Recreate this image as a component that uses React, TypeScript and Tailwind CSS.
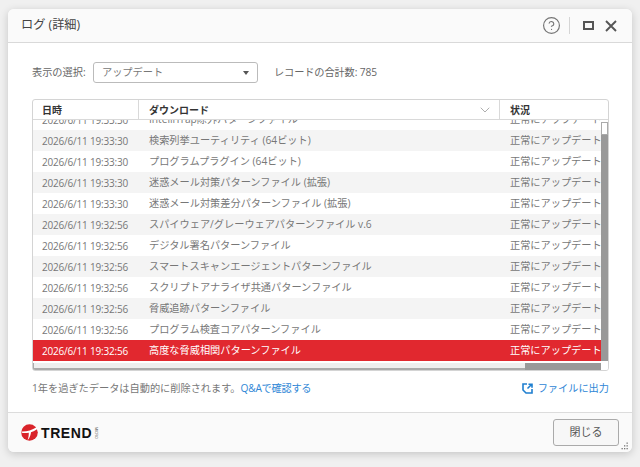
import { CircleHelp, ChevronDown } from 'lucide-react';

const ROWS = [
  { time: '2026/6/11 19:33:30', name: 'IntelliTrap除外パターンファイル' },
  { time: '2026/6/11 19:33:30', name: '検索列挙ユーティリティ (64ビット)' },
  { time: '2026/6/11 19:33:30', name: 'プログラムプラグイン (64ビット)' },
  { time: '2026/6/11 19:33:30', name: '迷惑メール対策パターンファイル (拡張)' },
  { time: '2026/6/11 19:33:30', name: '迷惑メール対策差分パターンファイル (拡張)' },
  { time: '2026/6/11 19:32:56', name: 'スパイウェア/グレーウェアパターンファイル v.6' },
  { time: '2026/6/11 19:32:56', name: 'デジタル署名パターンファイル' },
  { time: '2026/6/11 19:32:56', name: 'スマートスキャンエージェントパターンファイル' },
  { time: '2026/6/11 19:32:56', name: 'スクリプトアナライザ共通パターンファイル' },
  { time: '2026/6/11 19:32:56', name: '脅威追跡パターンファイル' },
  { time: '2026/6/11 19:32:56', name: 'プログラム検査コアパターンファイル' },
  { time: '2026/6/11 19:32:56', name: '高度な脅威相関パターンファイル' },
];

export default function App() {
  return (
    <div className="w-[640px] h-[467px] bg-[#f0f0f0] pt-[9px] px-2 font-['Open_Sans','Noto_Sans_CJK_JP',sans-serif] overflow-hidden">
      <div className="w-[624px] h-[443px] bg-white rounded-md shadow-[0_2px_8px_rgba(0,0,0,0.18)] flex flex-col overflow-hidden relative">
        {/* Title bar */}
        <div className="h-[34px] shrink-0 bg-[#fafafa] border-b border-[#d9d9d9] flex items-center pl-[13px] pr-[15px]">
          <span className="text-[12.2px] text-[#444]">ログ (詳細)</span>
          <CircleHelp className="ml-auto w-[19px] h-[19px] text-[#777]" strokeWidth={1.5} />
          <div className="w-px h-[17px] bg-[#d5d5d5] ml-[8px] mr-[13px]" />
          <svg width="11" height="9" viewBox="0 0 11 9" fill="none" stroke="#555" strokeWidth="2" className="shrink-0">
            <rect x="1" y="1" width="9" height="7" />
          </svg>
          <svg width="12" height="12" viewBox="0 0 12 12" fill="none" stroke="#555" strokeWidth="1.9" className="ml-[11px] shrink-0">
            <path d="M1 1l10 10M11 1L1 11" />
          </svg>
        </div>

        {/* Body */}
        <div className="flex-1 px-6 pt-[19px] min-h-0">
          <div className="flex items-center h-[21px]">
            <span className="text-[10.2px] text-[#666] w-[61px] pt-px">表示の選択:</span>
            <div className="w-[165px] h-[21px] border border-[#bbb] rounded-[3px] flex items-center pl-2 pr-[8px]">
              <span className="text-[10.2px] text-[#777]">アップデート</span>
              <span className="ml-auto w-0 h-0 border-x-[3.5px] border-x-transparent border-t-[4px] border-t-[#555]" />
            </div>
            <span className="ml-4 text-[10.2px] text-[#666] tracking-[-0.1px] pt-px">レコードの合計数: 785</span>
          </div>

          {/* Table */}
          <div className="mt-[16px] w-[577px] h-[272px] border border-[#d4d4d4] rounded-[3px] flex flex-col overflow-hidden">
            <div className="h-5 shrink-0 flex items-center border-b border-[#d9d9d9] text-[10px] leading-none font-bold text-[#333]">
              <div className="w-[106px] h-full pl-[9px] pt-px flex items-center border-r border-[#d9d9d9]">日時</div>
              <div className="w-[361px] h-full pl-[10px] pr-[6px] pt-px flex items-center justify-between border-r border-[#d9d9d9]">
                <span>ダウンロード</span>
                <ChevronDown className="w-4 h-4 text-[#999]" strokeWidth={1.2} />
              </div>
              <div className="pl-[10px] pt-px">状況</div>
            </div>
            <div className="flex-1 min-h-0 flex">
              <div className="flex-1 min-w-0 flex flex-col">
                <div className="flex-1 min-h-0 overflow-hidden">
                  <div className="mt-[-11px]">
                    {ROWS.map((row, i) => {
                      const selected = i === ROWS.length - 1;
                      return (
                        <div
                          key={i}
                          className={`h-[21px] pt-px flex items-center whitespace-nowrap overflow-hidden text-[10.2px] ${
                            selected ? 'bg-[#e1282f] text-white' : i % 2 === 1 ? 'bg-[#f4f4f4] text-[#777]' : 'bg-white text-[#777]'
                          }`}
                        >
                          <div className="w-[107px] pl-[9px] shrink-0 text-[10px] tracking-[-0.2px]">{row.time}</div>
                          <div className="w-[361px] pl-[9px] shrink-0">{row.name}</div>
                          <div className="pl-[9px] shrink-0">正常にアップデート</div>
                        </div>
                      );
                    })}
                  </div>
                </div>
                <div className="h-[9px] shrink-0 flex items-end">
                  <div className="h-[7px] w-full bg-[#eeeeee] border-b-2 border-l border-[#aaa] flex justify-end">
                    <div className="w-[76px] h-[7px] bg-[#999]" />
                  </div>
                </div>
              </div>
              <div className="w-[7px] shrink-0 flex flex-col">
                <div className="h-[2px] bg-white" />
                <div className="h-[13px] bg-white border border-[#aaa]" />
                <div className="flex-1 bg-[#999]" />
                <div className="h-[9px] bg-white" />
              </div>
            </div>
          </div>

          <div className="mt-[10px] flex items-center justify-between text-[10.2px] w-[577px]">
            <span className="text-[#777]">
              1年を過ぎたデータは自動的に削除されます。<span className="text-[#2e86d6] tracking-[-0.25px]">Q&amp;Aで確認する</span>
            </span>
            <span className="flex items-center gap-[5px] text-[#2e86d6]">
              <svg width="11" height="11" viewBox="0 0 11 11" fill="none" stroke="#1f7fd0" strokeWidth="1.6">
                <path d="M5 1H1v6l3 3h6V6" />
                <path d="M6.5 1.2H10v3.5M9.8 1.2L5.5 5.5" />
              </svg>
              ファイルに出力
            </span>
          </div>
        </div>

        {/* Footer */}
        <div className="h-[40px] shrink-0 bg-[#fafafa] border-t border-[#dcdcdc] flex items-center pl-[13px] pr-[3px]">
          <svg width="17" height="17" viewBox="0 0 17 17" className="shrink-0">
            <circle cx="8.5" cy="8.5" r="8.3" fill="#d9232a" />
            <path d="M0.6 7.4C5.5 7.6 11 6.2 15.6 3.2L16.4 5C13.4 7 11.6 7.8 10 8.2C9.8 10.6 9 13.4 6.6 16.2C7.6 13.4 7.8 10.8 7.8 8.8C5 9.2 2.6 9.2 0.6 8.8Z" fill="#fff" />
          </svg>
          <span className="ml-[3px] text-[14px] leading-none font-bold tracking-[0.6px] text-[#111] font-['Liberation_Sans',sans-serif]">TREND</span>
          <span className="ml-[1px] text-[3.5px] leading-none text-[#555] [writing-mode:vertical-rl] font-['Liberation_Sans',sans-serif]">MICRO</span>
          <button className="ml-auto h-[27px] w-[66px] bg-[#f7f7f7] border border-[#aaa] rounded-[3px] text-[11px] text-[#555]">閉じる</button>
          <svg width="9" height="9" viewBox="0 0 9 9" className="self-end mb-[1px] ml-[1px] shrink-0" fill="#777">
            <rect x="6.5" y="0.5" width="1.3" height="1.3" />
            <rect x="4" y="3.2" width="1.3" height="1.3" />
            <rect x="6.5" y="3.2" width="1.3" height="1.3" />
            <rect x="1.5" y="6" width="1.3" height="1.3" />
            <rect x="4" y="6" width="1.3" height="1.3" />
            <rect x="6.5" y="6" width="1.3" height="1.3" />
          </svg>
        </div>
      </div>
    </div>
  );
}
